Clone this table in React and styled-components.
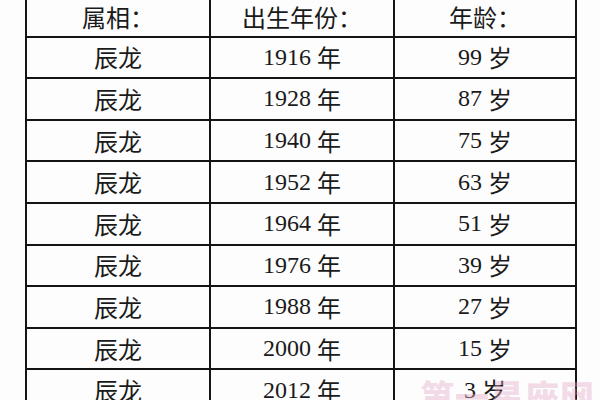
import styled, { createGlobalStyle } from "styled-components";

const GlobalStyle = createGlobalStyle`
	html, body {
		margin: 0;
		padding: 0;
		background: #ffffff;
	}
	#root {
		width: 600px;
		height: 400px;
		overflow: hidden;
	}
`;

const Page = styled.div`
	position: relative;
	width: 600px;
	height: 400px;
	overflow: hidden;
	background: #fdfdfd;
`;

const Table = styled.div`
	display: grid;
	grid-template-columns: 184px 184px 182px;
	grid-auto-rows: 41.6px;
	width: max-content;
	margin-left: 25px;
	margin-top: -6px;
	border-left: 2px solid #141414;
	border-top: 2px solid #141414;
`;

const Cell = styled.div`
	box-sizing: border-box;
	display: flex;
	align-items: center;
	justify-content: center;
	border-right: 2px solid #141414;
	border-bottom: 2px solid #141414;
	padding-left: ${(p) => p.$shift || 0}px;
	padding-top: ${(p) => p.$lift || 0}px;

	font-family: "Liberation Serif", "Noto Sans CJK SC", serif;
	font-size: 24px;
	color: #1a1a1a;
	white-space: pre;
`;

const Han = styled.span`
	font-family: "Noto Sans CJK SC", sans-serif;
	font-size: 24px;
	line-height: 1;
`;

const Watermark = styled.div`
	position: absolute;
	left: 420px;
	top: 371px;
	font-family: "Noto Sans CJK SC", sans-serif;
	font-weight: 900;
	font-size: 34px;
	letter-spacing: 1px;
	color: rgba(228, 170, 200, 0.42);
	white-space: nowrap;
	pointer-events: none;
`;

const years = [1916, 1928, 1940, 1952, 1964, 1976, 1988, 2000, 2012];

const Row = ({ year }) => (
	<>
		<Cell $shift={-6}>
			<Han>辰龙</Han>
		</Cell>
		<Cell>
			{year} <Han>年</Han>
		</Cell>
		<Cell $shift={-8}>
			{2015 - year} <Han>岁</Han>
		</Cell>
	</>
);

const App = () => {
	return (
		<Page>
			<GlobalStyle />
			<Table>
				<Cell $shift={-6} $lift={2}>
					<Han>属相：</Han>
				</Cell>
				<Cell $lift={2}>
					<Han>出生年份：</Han>
				</Cell>
				<Cell $lift={2}>
					<Han>年龄：</Han>
				</Cell>
				{years.map((year) => (
					<Row key={year} year={year} />
				))}
			</Table>
			<Watermark>第一星座网</Watermark>
		</Page>
	);
};

export default App;
